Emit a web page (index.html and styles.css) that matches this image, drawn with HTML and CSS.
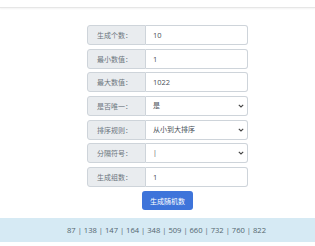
FILE: index.html
```html
<!DOCTYPE html>
<html>
  <head>
    <title>随机数生成</title>
    <meta name="viewport" content="width=device-width, initial-scale=1.0">
    <link rel="stylesheet" href="styles.css">
  </head>
  <body>
    <header class="topbar"></header>
    <main class="page">
      <form class="form">
        <div class="row">
          <span class="label">生成个数：</span>
          <input class="field" type="text" value="10">
        </div>
        <div class="row">
          <span class="label">最小数值：</span>
          <input class="field" type="text" value="1">
        </div>
        <div class="row">
          <span class="label">最大数值：</span>
          <input class="field" type="text" value="1022">
        </div>
        <div class="row">
          <span class="label">是否唯一：</span>
          <div class="pick">
            <select class="field">
              <option>是</option>
              <option>否</option>
            </select>
            <svg class="chev" width="6" height="4" viewBox="0 0 6 4"><path d="M0.8 0.8 L3 3 L5.2 0.8" fill="none" stroke="#444" stroke-width="1.1"/></svg>
          </div>
        </div>
        <div class="row">
          <span class="label">排序规则：</span>
          <div class="pick">
            <select class="field">
              <option>从小到大排序</option>
              <option>从大到小排序</option>
            </select>
            <svg class="chev" width="6" height="4" viewBox="0 0 6 4"><path d="M0.8 0.8 L3 3 L5.2 0.8" fill="none" stroke="#444" stroke-width="1.1"/></svg>
          </div>
        </div>
        <div class="row">
          <span class="label">分隔符号：</span>
          <div class="pick">
            <select class="field">
              <option>|</option>
              <option>,</option>
            </select>
            <svg class="chev" width="6" height="4" viewBox="0 0 6 4"><path d="M0.8 0.8 L3 3 L5.2 0.8" fill="none" stroke="#444" stroke-width="1.1"/></svg>
          </div>
        </div>
        <div class="row">
          <span class="label">生成组数：</span>
          <input class="field" type="text" value="1">
        </div>
        <button class="btn" type="button">生成随机数</button>
      </form>
      <div class="result">87 | 138 | 147 | 164 | 348 | 509 | 660 | 732 | 760 | 822</div>
    </main>
  </body>
</html>
```
FILE: styles.css
```css
* {
  margin: 0;
  padding: 0;
  box-sizing: border-box;
  font-family: "Open Sans", "Noto Sans CJK SC", sans-serif;
}
body {
  background: #fff;
  color: #495057;
}
.topbar {
  height: 8px;
  border-bottom: 1px solid #e6e6e6;
  box-shadow: 0 1px 2px rgba(0, 0, 0, 0.05);
}
.page {
  padding-top: 17px;
}
.form {
  display: flex;
  flex-direction: column;
  align-items: center;
  gap: 3.67px;
  padding-left: 20px;
}
.row {
  display: flex;
  width: 161px;
  height: 20px;
}
.label {
  width: 59px;
  flex-shrink: 0;
  display: flex;
  align-items: center;
  padding-left: 9px;
  font-size: 7px;
  color: #6c757d;
  background: #e9ecef;
  border: 1px solid #ced4da;
  border-radius: 3px 0 0 3px;
}
.field {
  flex: 1;
  min-width: 0;
  height: 20px;
  line-height: 18px;
  border: 1px solid #ced4da;
  border-left: none;
  border-radius: 0 3px 3px 0;
  padding: 0 7px;
  font-size: 7.5px;
  color: #495057;
  background: #fff;
  outline: none;
  appearance: none;
  -webkit-appearance: none;
}
select.field {
  font-size: 7px;
  padding: 0 7px;
  color: #495057;
}
.pick {
  position: relative;
  flex: 1;
  display: flex;
  height: 20px;
}
.chev {
  position: absolute;
  right: 4px;
  top: 8px;
  pointer-events: none;
}
.btn {
  margin-top: 0.5px;
  width: 51px;
  height: 19px;
  font-size: 7px;
  color: #fff;
  background: #3e74da;
  border: none;
  border-radius: 3px;
}
.result {
  margin-top: 8px;
  height: 24px;
  display: flex;
  align-items: center;
  justify-content: center;
  padding-left: 18px;
  font-size: 7.6px;
  color: #54666f;
  background: #d6eaf4;
}
```
